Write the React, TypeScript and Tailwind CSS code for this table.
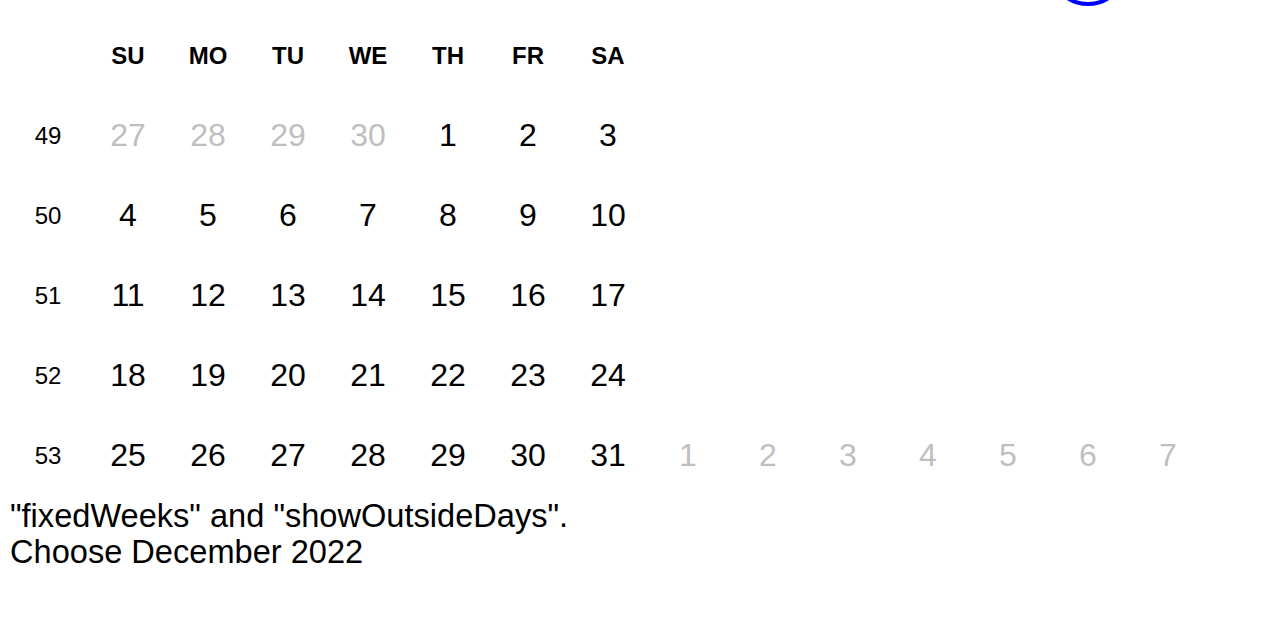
import React from "react";

const heads = ["SU", "MO", "TU", "WE", "TH", "FR", "SA"];

type Day = { n: number; out?: boolean };

const rows: { wk: number; days: Day[] }[] = [
  {
    wk: 49,
    days: [
      { n: 27, out: true },
      { n: 28, out: true },
      { n: 29, out: true },
      { n: 30, out: true },
      { n: 1 },
      { n: 2 },
      { n: 3 },
    ],
  },
  { wk: 50, days: [4, 5, 6, 7, 8, 9, 10].map((n) => ({ n })) },
  { wk: 51, days: [11, 12, 13, 14, 15, 16, 17].map((n) => ({ n })) },
  { wk: 52, days: [18, 19, 20, 21, 22, 23, 24].map((n) => ({ n })) },
  {
    wk: 53,
    days: [
      ...[25, 26, 27, 28, 29, 30, 31].map((n) => ({ n })),
      ...[1, 2, 3, 4, 5, 6, 7].map((n) => ({ n, out: true })),
    ],
  },
];

export default function App() {
  return (
    <div className="relative w-[1262px] h-[632px] overflow-hidden bg-white text-black font-['Liberation_Sans',Arial,sans-serif] text-[32px]">
      <div className="absolute left-[1048px] top-[-74px] w-[80px] h-[80px] rounded-full border-[4px] border-[#0000ff]" />
      <div className="pl-[8px] pt-[16px]">
        <div className="flex">
          <div className="w-[80px] h-[80px]" />
          {heads.map((h) => (
            <div
              key={h}
              className="w-[80px] h-[80px] flex items-center justify-center text-[24px] font-bold"
            >
              {h}
            </div>
          ))}
        </div>
        {rows.map((r) => (
          <div key={r.wk} className="flex">
            <div className="w-[80px] h-[80px] flex items-center justify-center text-[24px]">
              {r.wk}
            </div>
            {r.days.map((d, i) => (
              <div
                key={i}
                className={
                  "w-[80px] h-[80px] shrink-0 flex items-center justify-center pb-[2px] " +
                  (d.out ? "text-[#bfbfbf]" : "text-black")
                }
              >
                {d.n}
              </div>
            ))}
          </div>
        ))}
        <div className="leading-[36px] text-[32.6px] pl-[2px] pt-[2px]">
          <div>"fixedWeeks" and "showOutsideDays".</div>
          <div>Choose December 2022</div>
        </div>
      </div>
    </div>
  );
}
